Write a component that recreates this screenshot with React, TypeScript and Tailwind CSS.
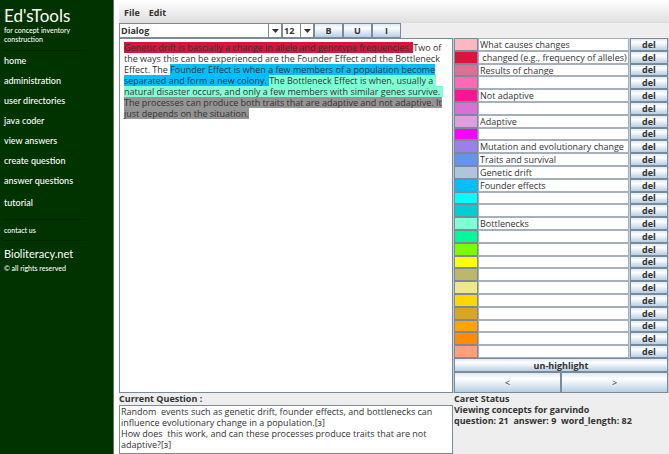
import { useState } from 'react'

const NAV_LINKS = [
    { label: 'home', path: '#home' },
    { label: 'administration', path: '#administration' },
    { label: 'user directories', path: '#directories' },
    { label: 'java coder', path: '#coder' },
    { label: 'view answers', path: '#answers' },
    { label: 'create question', path: '#create' },
    { label: 'answer questions', path: '#answer' },
]

const CONCEPTS = [
    { color: 'bg-[#ffb6c1]', name: 'What causes changes' },
    { color: 'bg-[#dc143c]', name: ' changed (e.g., frequency of alleles)' },
    { color: 'bg-[#db7093]', name: 'Results of change' },
    { color: 'bg-[#ff69b4]', name: '' },
    { color: 'bg-[#ff1493]', name: 'Not adaptive' },
    { color: 'bg-[#da70d6]', name: '' },
    { color: 'bg-[#dda0dd]', name: 'Adaptive' },
    { color: 'bg-[#ff00ff]', name: '' },
    { color: 'bg-[#9a80ea]', name: 'Mutation and evolutionary change' },
    { color: 'bg-[#6495ed]', name: 'Traits and survival' },
    { color: 'bg-[#b0c4de]', name: 'Genetic drift' },
    { color: 'bg-[#00bfff]', name: 'Founder effects' },
    { color: 'bg-[#00ffff]', name: '' },
    { color: 'bg-[#00ced1]', name: '' },
    { color: 'bg-[#7fffd4]', name: 'Bottlenecks' },
    { color: 'bg-[#00fa9a]', name: '' },
    { color: 'bg-[#7cfc00]', name: '' },
    { color: 'bg-[#ffff00]', name: '' },
    { color: 'bg-[#bdb76b]', name: '' },
    { color: 'bg-[#f0e68c]', name: '' },
    { color: 'bg-[#ffd700]', name: '' },
    { color: 'bg-[#daa520]', name: '' },
    { color: 'bg-[#ffa500]', name: '' },
    { color: 'bg-[#ff8c00]', name: '' },
    { color: 'bg-[#ffa07a]', name: '' },
]

const RED = 'bg-[#dc143c]'
const BLUE = 'bg-[#00bfff]'
const AQUA = 'bg-[#7fffd4]'
const GRAY = 'bg-[#949494]'

const ANSWER_LINES = [
    [
        { text: 'Genetic drift is bascially a change in allele and genotype frequencies. ', color: RED },
        { text: 'Two of', color: '' },
    ],
    [{ text: 'the ways this can be experienced are the Founder Effect and the Bottleneck', color: '' }],
    [
        { text: 'Effect. The ', color: '' },
        { text: 'Founder Effect is when a few members of a population become', color: BLUE },
    ],
    [
        { text: 'separated and form a new colony. ', color: BLUE },
        { text: 'The Bottleneck Effect is when, usually a ', color: AQUA },
    ],
    [{ text: 'natural disaster occurs, and only a few members with similar genes survive. ', color: AQUA }],
    [{ text: 'The processes can produce both traits that are adaptive and not adaptive. It', color: GRAY }],
    [{ text: 'just depends on the situation.', color: GRAY }],
]

const QUESTION = `Random  events such as genetic drift, founder effects, and bottlenecks can
influence evolutionary change in a population.[ɜ]
How does  this work, and can these processes produce traits that are not
adaptive?[ɜ]`

const METAL = 'border border-[#7a8a99] bg-linear-to-b from-[#dde8f3] via-white via-30% to-[#b8cfe5]'

function Sidebar() {
    return (
        <aside className="w-[114px] shrink-0 border-r border-[#5f7f5f] bg-[#003300] pl-1 font-['Lato',sans-serif] text-white">
            <h1 className="pt-[5px] text-[17px] leading-[21px]">Ed'sTools</h1>
            <p className="text-[7px] leading-[9px] font-medium">for concept inventory<br />construction</p>
            <hr className="mt-[6px] mr-[26px] border-[#002600]" />
            <nav className="flex flex-col text-[9px] leading-[20px] font-medium">
                {NAV_LINKS.map((link) => (
                    <a key={link.path} href={link.path}>{link.label}</a>
                ))}
                <a href="#tutorial" className="mt-[2px]">tutorial</a>
            </nav>
            <hr className="mt-[6px] mr-[26px] border-[#002600]" />
            <a href="#contact" className="block text-[7px] leading-[20px] font-medium">contact us</a>
            <hr className="mr-[26px] border-[#002600]" />
            <a href="#bioliteracy" className="mt-[5px] block text-[11px] leading-[15px]">Bioliteracy.net</a>
            <p className="text-[7px] leading-[14px] font-medium">© all rights reserved</p>
        </aside>
    )
}

type ComboProps = { label: string; value: string; className: string }

function Combo({ label, value, className }: ComboProps) {
    return (
        <div className={`relative border border-[#7a8a99] bg-white ${className}`}>
            <select aria-label={label} className="block h-full w-full appearance-none pl-px font-bold">
                <option>{value}</option>
            </select>
            <span className="pointer-events-none absolute inset-y-0 right-0 flex w-[13px] items-center justify-center border-l border-[#7a8a99]">
                <svg width="7" height="4" viewBox="0 0 7 4"><path d="M0 0h7L3.5 4z" fill="#333" /></svg>
            </span>
        </div>
    )
}

function Toolbar() {
    return (
        <div className="flex h-[15px] text-[9px]">
            <Combo label="Font" value="Dialog" className="w-[163px]" />
            <Combo label="Size" value="12" className="w-[32px]" />
            {['B', 'U', 'I'].map((style) => (
                <button key={style} className={`w-[29px] leading-none font-bold ${METAL}`}>{style}</button>
            ))}
        </div>
    )
}

function Answer() {
    return (
        <div
            role="textbox"
            aria-label="Answer"
            aria-multiline="true"
            contentEditable
            suppressContentEditableWarning
            className="min-w-0 flex-1 border border-[#7a8a99] bg-white px-[4px] py-[3px] text-[9px] leading-[11px] whitespace-pre"
        >
            {ANSWER_LINES.map((line, index) => (
                <div key={index} className="flex">
                    {line.map((part) =>
                        part.color ? (
                            <mark key={part.text} className={`text-[#333] ${part.color}`}>{part.text}</mark>
                        ) : (
                            <span key={part.text}>{part.text}</span>
                        )
                    )}
                </div>
            ))}
        </div>
    )
}

function Concepts() {
    const [names, setNames] = useState(CONCEPTS.map((concept) => concept.name))

    const rename = (index: number, name: string) =>
        setNames(names.map((old, i) => (i === index ? name : old)))

    return (
        <section className="flex w-[216px] shrink-0 flex-col bg-[#c4ced8] px-px">
            <div className="grid h-[320px] auto-rows-fr">
                {CONCEPTS.map((concept, index) => (
                    <div key={concept.color} className="flex min-h-0">
                        <button aria-label={`Highlight ${index + 1}`} className={`w-[24px] border border-[#7a8a99] ${concept.color}`} />
                        <input
                            aria-label={`Concept ${index + 1}`}
                            value={names[index]}
                            onChange={(e) => rename(index, e.target.value)}
                            className="min-w-0 flex-1 border border-[#a4b0bc] bg-white pl-px text-[9px] leading-[11px]"
                        />
                        <button onClick={() => rename(index, '')} className={`ml-px w-[38px] text-[9px] leading-none font-bold ${METAL}`}>del</button>
                    </div>
                ))}
            </div>
            <button className={`h-[14px] text-[9px] leading-none font-bold ${METAL}`}>un-highlight</button>
            <div className="flex h-[21px] text-[9px]">
                <button aria-label="Previous" className={`flex-1 ${METAL}`}>&lt;</button>
                <button aria-label="Next" className={`flex-1 ${METAL}`}>&gt;</button>
            </div>
        </section>
    )
}

function App() {
    return (
        <div className="flex min-h-screen bg-white font-['Open_Sans','Noto_Sans',sans-serif] text-[#333]">
            <Sidebar />
            <main className="ml-[5px] flex min-w-0 flex-1 flex-col bg-[#eee]">
                <div className="flex h-[23px] items-center gap-[9px] border-b border-[#ddd] bg-linear-to-b from-white to-[#e0e0e0] pt-[3px] pl-[5px] text-[9px] font-bold">
                    <button>File</button>
                    <button>Edit</button>
                </div>
                <Toolbar />
                <div className="flex">
                    <Answer />
                    <Concepts />
                </div>
                <div className="flex flex-1">
                    <div className="flex min-w-0 flex-1 flex-col">
                        <label htmlFor="question" className="text-[9px] leading-[12px] font-bold">Current Question :</label>
                        <textarea
                            id="question"
                            readOnly
                            value={QUESTION}
                            className="w-full flex-1 resize-none overflow-hidden border border-[#7a8a99] bg-white pl-px text-[9px] leading-[11px] whitespace-pre"
                        />
                    </div>
                    <div className="w-[216px] shrink-0 pl-px text-[9px] leading-[11px] font-bold">
                        <h2>Caret Status</h2>
                        <p>Viewing concepts for garvindo</p>
                        <p className="whitespace-pre">question: 21  answer: 9  word_length: 82</p>
                    </div>
                </div>
            </main>
        </div>
    )
}

export default App
